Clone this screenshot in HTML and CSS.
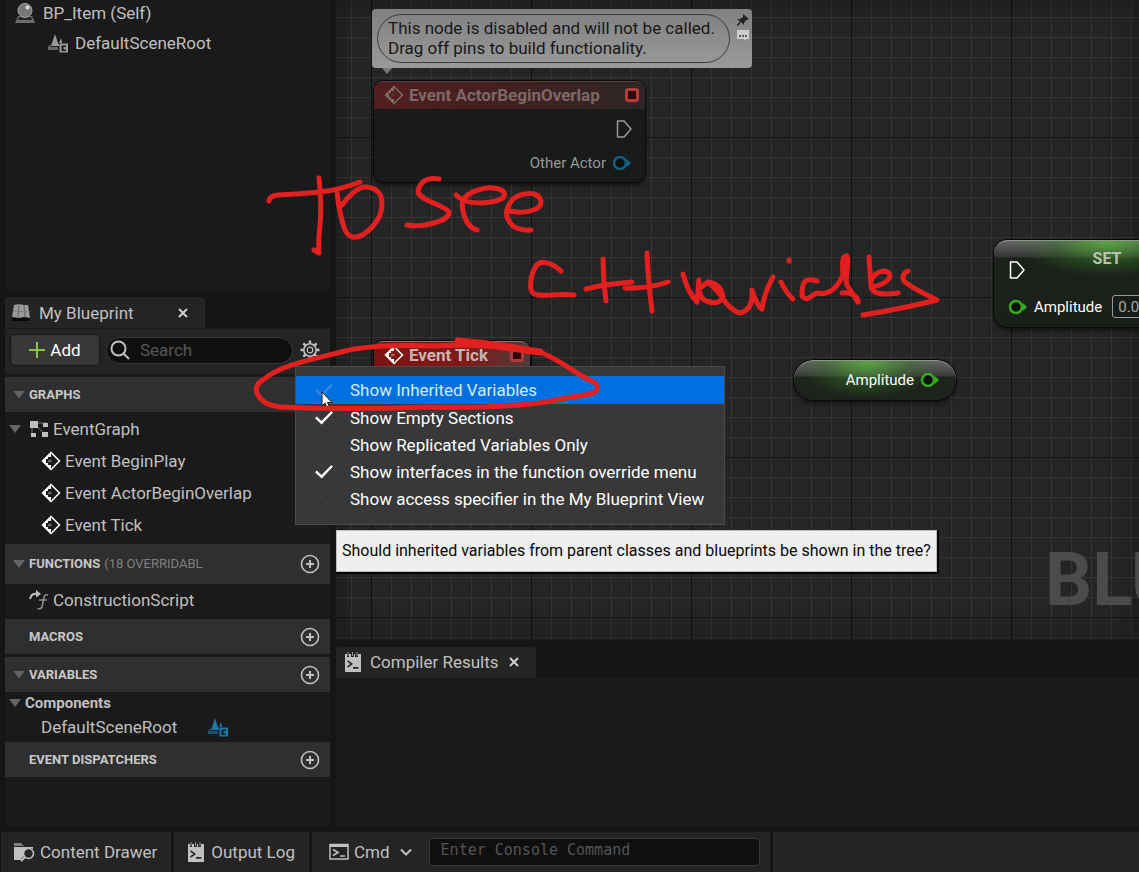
FILE: index.html
```html
<!DOCTYPE html>
<html lang="en">
<head>
<meta charset="utf-8">
<meta name="viewport" content="width=device-width, initial-scale=1">
<title>BP_Item Blueprint Editor</title>
<link rel="stylesheet" href="styles.css">
</head>
<body>
<svg class="defs" aria-hidden="true">
  <symbol id="i-scene" viewBox="0 0 22 20">
    <path d="M1 14h10v3H1zM3 11 1 14h3z" opacity=".6"/>
    <path d="M8 1 4 13h8zM14 5l-3 8h5z"/>
    <path d="M12 10h9v9h-9z" class="cut"/>
    <path fill-rule="evenodd" d="M12.500 10.500h8.500v9h-8.500zM14.500 12.500v5.500h4.500v-1.500h-2.500v-2.500h2.500v-1.500z"/>
  </symbol>
  <symbol id="i-event" viewBox="0 0 20 20">
    <path d="M10 1.500 18.500 10 10 18.500 1.500 10z" fill="none" stroke="currentColor" stroke-width="1.500"/>
    <path d="M10 1v5H7v2H5v4h2v2h3v5L1 10z"/>
    <path d="M7 8.800h3.500v2.400H7z" opacity=".35"/>
  </symbol>
  <symbol id="i-log" viewBox="0 0 16 20">
    <path fill-rule="evenodd" d="M0 2h2v3h2V2h2v3h3V2h1v3h3V2h3v18H0zM2.500 8v2l3 2-3 2v2l5-3.500v-1zM8 15v1.800h5.500V15z"/>
    <path d="M2.500 0h1v4h-1zM7 0h1v4H7zM11.500 0h1v4h-1z" opacity=".7"/>
  </symbol>
  <symbol id="i-plus" viewBox="0 0 20 20">
    <circle cx="10" cy="10" r="8.500" fill="none" stroke="currentColor" stroke-width="1.600"/>
    <path d="M10 6v8M6 10h8" stroke="currentColor" stroke-width="2"/>
  </symbol>
  <symbol id="i-exec" viewBox="0 0 16 18">
    <path d="M1.500 1h6.500l7 8-7 8H1.500z" fill="none" stroke="currentColor" stroke-width="1.500" stroke-linejoin="round"/>
  </symbol>
  <symbol id="i-pin" viewBox="0 0 20 16">
    <circle cx="8" cy="8" r="6" fill="#0a120c" stroke="currentColor" stroke-width="2.500"/>
    <path d="m15 4 4 4-4 4z"/>
  </symbol>
  <symbol id="i-close" viewBox="0 0 10 10">
    <path d="m1 1 8 8M9 1 1 9" stroke="currentColor" stroke-width="2"/>
  </symbol>
</svg>

<main class="workspace">
  <aside class="side">
    <section class="components">
      <div class="item root">
        <svg class="icon" viewBox="0 0 20 20"><path d="M3 13h14l3 7H0z" fill="#6c6c6c"/><path d="M4 14h12l1 3H3z" fill="#222"/><circle cx="10" cy="7.500" r="7" fill="#777" stroke="#aaa"/><circle cx="12.500" cy="4.500" r="2" fill="#ddd"/></svg>
        <span>BP_Item (Self)</span>
      </div>
      <div class="item scene">
        <svg class="icon wide"><use href="#i-scene"/></svg>
        <span>DefaultSceneRoot</span>
      </div>
    </section>

    <section class="blueprint">
      <div class="tab">
        <svg class="icon" viewBox="0 0 20 20"><path d="M1 14h18v4H1z" fill="#090909"/><path d="M3 2 8 1l5 1h4l2 13-6-1-5 1-7-1z" fill="#999"/><path d="m8 1-1 13M13 2l1 12" stroke="#666"/><path d="m2 8 17 1" stroke="#7c7c7c"/></svg>
        <h2>My Blueprint</h2>
        <button class="close" aria-label="Close My Blueprint"><svg><use href="#i-close"/></svg></button>
      </div>
      <div class="toolbar">
        <button class="add"><svg class="plus" viewBox="0 0 16 16"><path d="M8 0v16M0 8h16" stroke="#8bc24a" stroke-width="2"/></svg>Add</button>
        <label class="search">
          <svg class="icon" viewBox="0 0 20 20"><circle cx="8.500" cy="8.500" r="7" fill="none" stroke="currentColor" stroke-width="2"/><path d="m13.500 13.500 5.500 5.500" stroke="currentColor" stroke-width="2"/></svg>
          <input type="search" placeholder="Search" aria-label="Search">
        </label>
        <button class="plain" aria-label="View options"><svg class="icon line" viewBox="0 0 20 20"><circle cx="10" cy="10" r="6.200" stroke-width="1.600"/><circle cx="10" cy="10" r="2.800" stroke-width="1.200"/><path stroke-width="2.400" d="M10 .5v3M10 16.500v3M.5 10h3M16.500 10h3M3.300 3.300l2.100 2.100M14.600 14.600l2.100 2.100M3.300 16.700l2.100-2.100M14.600 5.400l2.100-2.100"/></svg></button>
      </div>

      <div class="category"><i class="arrow"></i><h3>GRAPHS</h3></div>
      <div class="list">
        <div class="item graph"><i class="arrow"></i>
          <svg class="icon" viewBox="0 0 20 20"><path d="M3 5v11M5 4h13M6 5l10 11" stroke="#777" fill="none"/><path d="M1 2h8v7H1zM14 4h5v4h-5zM2 14h5v4H2zM13 13h6v5h-6z"/></svg>
          <span>EventGraph</span></div>
        <div class="item event"><svg class="icon white"><use href="#i-event"/></svg><span>Event BeginPlay</span></div>
        <div class="item event"><svg class="icon white"><use href="#i-event"/></svg><span>Event ActorBeginOverlap</span></div>
        <div class="item event"><svg class="icon white"><use href="#i-event"/></svg><span>Event Tick</span></div>
      </div>
      <div class="category tall"><i class="arrow"></i><h3>FUNCTIONS</h3><small>(18 OVERRIDABL</small>
        <button class="plain" aria-label="Add function"><svg class="icon"><use href="#i-plus"/></svg></button></div>
      <div class="item function">
        <svg class="icon line" viewBox="0 0 20 20"><path d="M1 9c1-5 4-6 8-5" stroke-width="2"/><path d="m7 0 5 4-5 3.500z" fill="currentColor" stroke="none"/><path d="M19 5c-3-1-4 1-4.500 4l-1 6c-.5 3-2 4.500-5 3.500M10 10h8" stroke="#8a8a8a" stroke-width="1.600"/></svg>
        <span>ConstructionScript</span></div>
      <div class="category"><i class="arrow none"></i><h3>MACROS</h3>
        <button class="plain" aria-label="Add macro"><svg class="icon"><use href="#i-plus"/></svg></button></div>
      <div class="category spaced"><i class="arrow"></i><h3>VARIABLES</h3>
        <button class="plain" aria-label="Add variable"><svg class="icon"><use href="#i-plus"/></svg></button></div>
      <div class="item group"><i class="arrow"></i><strong>Components</strong></div>
      <div class="item variable"><span>DefaultSceneRoot</span><svg class="icon wide blue"><use href="#i-scene"/></svg></div>
      <div class="category"><i class="arrow none"></i><h3>EVENT DISPATCHERS</h3>
        <button class="plain" aria-label="Add event dispatcher"><svg class="icon"><use href="#i-plus"/></svg></button></div>
    </section>
  </aside>

  <div class="center">
    <section class="canvas" aria-label="Event graph">
      <div class="watermark">BLUEPRINT</div>

      <div class="bubble">
        <p>This node is disabled and will not be called.<br>Drag off pins to build functionality.</p>
        <div class="bubble-tools">
          <svg viewBox="0 0 12 12"><path d="m6 0 6 5-2 1-1 0-2 3v2L4 8l-3 4-1 0 0-1 3-4L0 5h3l3-2z" fill="#222"/></svg>
          <svg viewBox="0 0 12 12"><path d="M0 1h12v9H9l-2 2v-2H0z" fill="#ccc"/><path d="M2 6h2v2H2zM5 6h2v2H5zM8 6h2v2H8z" fill="#53606c"/></svg>
        </div>
      </div>

      <article class="node overlap">
        <header><svg class="icon"><use href="#i-event"/></svg><h4>Event ActorBeginOverlap</h4><b class="delegate"></b></header>
        <div class="pins">
          <svg class="exec"><use href="#i-exec"/></svg>
          <div class="pin-row">Other Actor <svg class="pin blue"><use href="#i-pin"/></svg></div>
        </div>
      </article>

      <article class="node tick">
        <header><svg class="icon"><use href="#i-event"/></svg><h4>Event Tick</h4><b class="delegate"></b></header>
      </article>

      <article class="node setter">
        <h4>SET</h4>
        <svg class="exec"><use href="#i-exec"/></svg>
        <label class="pin-row"><svg class="pin green"><use href="#i-pin"/></svg> Amplitude <input type="text" value="0.0"></label>
      </article>

      <article class="node getter">Amplitude <svg class="pin green"><use href="#i-pin"/></svg></article>
    </section>

    <section class="results">
      <div class="tab">
        <svg class="log"><use href="#i-log"/></svg>
        <h2>Compiler Results</h2>
        <button class="close" aria-label="Close Compiler Results"><svg><use href="#i-close"/></svg></button>
      </div>
      <div class="results-body"></div>
    </section>
  </div>

  <div class="menu">
    <label class="hover"><input type="checkbox">Show Inherited Variables</label>
    <label><input type="checkbox" checked>Show Empty Sections</label>
    <label><input type="checkbox">Show Replicated Variables Only</label>
    <label><input type="checkbox" checked>Show interfaces in the function override menu</label>
    <label><input type="checkbox">Show access specifier in the My Blueprint View</label>
  </div>
  <div class="tooltip" role="tooltip">Should inherited variables from parent classes and blueprints be shown in the tree?</div>

  <svg class="cursor" viewBox="0 0 13 18"><path d="M1 1v14l3-3 2 5 2.500-1-2-4.500H11z" fill="#fff" stroke="#111"/></svg>

  <svg class="ink" viewBox="0 0 1139 832" role="img" aria-label="To see C++ variables">
    <path d="M269 201Q269 196 278 195Q300 194 320 192T360 182"/>
    <path d="M319 178Q322 205 320 225T319 253L314 250"/>
    <path d="M337 192Q339 213 345 230Q351 242 364 234Q386 218 381 196Q376 186 363 187Q353 190 342 205"/>
    <path d="M439 179C424 176 419 185 418 192C421 201 444 205 449 212C450 221 422 228 407 225"/>
    <path d="M456 195C465 206 492 204 503 198C510 189 490 185 478 190C459 196 462 206 463 211C465 221 470 228 477 230"/>
    <path d="M508 211C524 214 542 211 541 201C538 189 519 194 513 199C502 212 507 220 513 226Q521 231 531 230"/>
    <path d="M561 271C552 263 541 259 536 266C530 275 529 290 533 293C538 298 558 293 574 295"/>
    <path d="M586 289Q605 284 632 282M603 259Q603 280 606 301M625 288Q648 289 668 282M647 253Q648 280 652 311"/>
    <path d="M683 274Q688 293 697 302L699 280Q697 291 703 299Q716 307 723 298Q722 284 708 282L700 288M708 282Q719 292 726 303Q735 313 741 313Q754 308 752 290Q757 306 762 309Q764 293 773 277"/>
    <path d="M781 282Q787 294 793 299M789 260v1"/>
    <path d="M817 281C804 277 802 282 802 296C808 303 812 294 817 293Q833 297 843 275C842 263 842 255 847 256C850 263 844 278 847 285Q852 293 858 302C859 301 855 291 842 293"/>
    <path d="M869 257L871 286Q872 297 898 293M872 287C889 284 896 273 884 271Q874 272 871 281"/>
    <path d="M908 271Q901 274 904 281Q910 287 937 300Q906 308 863 315"/>
    <path d="M458 340Q499 343 540 352C565 362 577 376 594 382Q603 390 590 394Q565 398 540 403Q500 408 427 407Q350 410 280 407C256 404 250 386 263 380C279 365 315 359 345 351Q375 344 435 346Q500 343 530 352"/>
    <path d="M458 341L505 347 540 352" stroke-width="7"/>
  </svg>
</main>

<footer class="status">
  <button><svg class="icon wide" viewBox="0 0 22 20"><path d="M1 1h7l3 3H1z" opacity=".6"/><path d="M1 5h19v2l-3-1c-5 0-8 4-6 8l-3 3v1H1z"/><circle cx="15.500" cy="11.500" r="5" fill="none" stroke="currentColor" stroke-width="1.600"/><path d="m12 15-4 4" stroke="currentColor" stroke-width="2"/></svg>Content Drawer</button>
  <button><svg class="log"><use href="#i-log"/></svg>Output Log</button>
  <div class="console">
    <button><svg class="icon line" viewBox="0 0 20 20"><path d="M1 2.500h18v14.500H1z" stroke-width="1.500"/><path d="M1 3.500h18" stroke-width="3"/><path d="m4 7.500 5 3-5 3M11 14h5" stroke-width="1.600"/></svg>Cmd<svg class="chevron" viewBox="0 0 12 8"><path d="m1 1.500 5 5 5-5" fill="none" stroke="currentColor" stroke-width="2"/></svg></button>
    <input type="text" placeholder="Enter Console Command" aria-label="Console command">
  </div>
  <div class="rest"></div>
</footer>
</body>
</html>
```

FILE: styles.css
```css
* { box-sizing: border-box; }

body {
  margin: 0;
  min-height: 100vh;
  display: flex;
  flex-direction: column;
  overflow-x: hidden;
  background: #151515;
  color: #c0c0c0;
  font: 17px/20px Roboto, "Liberation Sans", sans-serif;
}

h2, h3, h4, p { margin: 0; font: inherit; }
button, input { font: inherit; color: inherit; }
button { border: 0; background: none; padding: 0; }
svg { display: block; flex: none; fill: currentColor; }

.defs { position: absolute; width: 0; height: 0; }
.cut { fill: #1a1a1a; }
.icon { width: 20px; height: 20px; }
.icon.wide { width: 22px; }
.line { fill: none; stroke: currentColor; }
.white { color: #fff; }
.log { width: 16px; height: 20px; }
.blue { color: #1c76a8; }

.workspace {
  position: relative;
  flex: 1;
  display: grid;
  grid-template-columns: 325px minmax(0, 1fr);
  gap: 6px;
  padding: 0 0 6px 5px;
}

.side { display: flex; flex-direction: column; gap: 6px; }
.components { flex: 1; background: #1a1a1a; padding-top: 3px; }
.item { display: flex; align-items: center; }
.root { padding-left: 10px; gap: 8px; }
.scene { padding-left: 42px; gap: 6px; margin-top: 10px; }
.scene svg { color: #999; }

.blueprint { background: linear-gradient(#151515 31px, #1a1a1a 31px); padding-bottom: 49px; }
.tab {
  display: flex;
  align-items: center;
  width: 200px;
  height: 31px;
  padding: 0 17px 0 6px;
  gap: 8px;
  background: #242424;
  border-radius: 4px 4px 0 0;
}
.close { margin-left: auto; color: #d0d0d0; }
.close svg { width: 10px; height: 10px; }

.toolbar {
  display: flex;
  align-items: center;
  gap: 7px;
  height: 45px;
  margin-top: 1px;
  padding: 0 10px 3px 6px;
  background: #242424;
}
.add {
  display: flex;
  align-items: center;
  justify-content: center;
  gap: 5px;
  width: 88px;
  height: 30px;
  border-radius: 4px;
  background: #383838;
  color: #fff;
  box-shadow: 0 0 0 1px #161616;
}
.plus { width: 16px; height: 16px; }
.search {
  flex: 1;
  display: flex;
  align-items: center;
  gap: 10px;
  height: 27px;
  padding: 0 10px 0 3px;
  border: 1px solid #383838;
  border-radius: 14px;
  background: #0f0f0f;
}
.search input { width: 100%; min-width: 0; padding: 0; border: 0; background: none; outline: 0; }
.search input::placeholder { color: #575757; opacity: 1; }

.category {
  display: flex;
  align-items: center;
  height: 35px;
  padding: 0 10px 0 8px;
  background: #2f2f2f;
  font-size: 13px;
}
.toolbar + .category { margin-top: 3px; }
.category h3 { font-weight: 700; color: #c8c8c8; }
.category small { margin-left: 4px; font-size: 13px; color: #808080; }
.category .plain { margin-left: auto; }
.category.tall { height: 40px; }
.category.spaced { margin-top: 3px; }
.arrow {
  flex: none;
  width: 12px;
  height: 8px;
  margin-right: 4px;
  background: #656565;
  clip-path: polygon(0 0, 100% 0, 50% 100%);
}
.arrow.none { visibility: hidden; }

.list .item { height: 32px; }
.list { padding: 1px 0 3px; }
.graph { padding-left: 4px; }
.graph svg { margin: 0 4px; }
.event { padding-left: 36px; gap: 4px; }
.function { height: 35px; padding: 0 0 3px 24px; gap: 4px; }
.group { height: 22px; padding-left: 4px; font-size: 15px; }
.variable { height: 28px; padding: 0 0 2px 36px; gap: 30px; }

.center { display: flex; flex-direction: column; gap: 7px; min-width: 0; }
.canvas {
  --minor: rgb(255 255 255 / 7%);
  position: relative;
  flex: 1;
  overflow: hidden;
  background-color: #252525;
  background-image:
    linear-gradient(90deg, #111 1px, transparent 1px),
    linear-gradient(#151515 1px, transparent 1px),
    linear-gradient(90deg, var(--minor) 1px, transparent 1px),
    linear-gradient(var(--minor) 1px, transparent 1px);
  background-size: 160px 160px, 160px 160px, 20px 20px, 20px 20px;
  background-position: 35px 137px, 35px 137px, 15px 17px, 15px 17px;
  box-shadow: inset 0 0 30px rgb(0 0 0 / 35%);
}
.watermark {
  position: absolute;
  left: 709px;
  top: 540px;
  color: #4b4b4b;
  font-size: 74px;
  line-height: 80px;
  font-weight: 700;
}

.bubble {
  position: absolute;
  left: 36px;
  top: 9px;
  display: flex;
  gap: 7px;
  padding: 5px 3px 5px 5px;
  border-radius: 4px;
  background: linear-gradient(#808080, #9a9a9a);
  color: #171717;
  white-space: nowrap;
}
.bubble::after {
  content: "";
  position: absolute;
  left: 10px;
  top: 100%;
  width: 10px;
  height: 6px;
  background: #777;
  clip-path: polygon(0 0, 100% 0, 50% 100%);
}
.bubble p { padding: 3px 14px 4px 10px; border: 1px solid #3c3c3c; border-radius: 25px; }
.bubble-tools { display: grid; gap: 3px; align-content: start; }
.bubble-tools svg { width: 12px; height: 12px; }

.node {
  position: absolute;
  border-radius: 9px;
  background: #171a18;
  color: #e6e6e6;
  font-size: 15px;
  box-shadow: 0 0 0 1px #0a0a0a, 0 3px 5px rgb(0 0 0 / 60%);
  white-space: nowrap;
}
.node h4 { font-size: 17px; font-weight: 700; }
.node header { display: flex; align-items: center; gap: 5px; height: 28px; padding: 0 6px 2px 10px; border-radius: 9px 9px 0 0; }
.delegate { width: 14px; height: 14px; margin-left: auto; border: 3px solid #b13a3a; border-radius: 3px; background: #2c0808; }
.exec { width: 16px; height: 18px; }
.pin { width: 20px; height: 16px; }
.pin-row { display: flex; align-items: center; gap: 6px; }
.green { color: #38a81e; }

.overlap { left: 38px; top: 81px; width: 271px; height: 101px; background: rgb(21 25 22 / 85%); color: #7d6868; }
.overlap header { background: linear-gradient(90deg, #521e1e, #422020 50%, #2c2625); border-top: 1px solid #514141; }
.overlap .pins { display: grid; justify-items: end; gap: 15px; padding: 11px 13px; color: #999; }
.overlap .pin.blue { color: #175e80; }

.tick { left: 38px; top: 341px; width: 156px; height: 100px; color: #c9b4b4; }
.tick header { background: linear-gradient(90deg, #7c1313, #811a1a 60%, #4c3c3a); border-top: 1px solid #8b7777; }
.tick .icon { color: #fff; }

.setter {
  left: 658px;
  top: 240px;
  width: 226px;
  padding: 8px 14px 9px;
  border-radius: 14px;
  background:
    radial-gradient(ellipse 90px 36px at 50% 0, rgb(90 180 62 / 80%), rgb(50 120 35 / 40%) 60%, transparent),
    linear-gradient(#666 0, #333 16px, #1c211c 17px, #1a1f19);
  border-top: 1px solid #8b9b85;
}
.setter h4 { text-align: center; font-size: 16px; color: #b7c4b2; }
.setter .exec { margin: -8px 0 16px 1px; color: #fff; }
.setter .pin-row { color: #fff; }
.setter input { width: 50px; height: 23px; margin-left: 4px; padding: 0 5px; border: 1px solid #999; border-radius: 3px; background: #181c18; color: #aaa; }

.getter {
  left: 458px;
  top: 360px;
  width: 162px;
  height: 40px;
  display: flex;
  align-items: center;
  justify-content: flex-end;
  gap: 6px;
  padding: 0 16px 2px 0;
  border-radius: 20px;
  border-top: 1px solid #8b9b85;
  background:
    radial-gradient(ellipse 70px 38px at 45% 0, rgb(90 180 62 / 80%), rgb(50 120 35 / 40%) 60%, transparent),
    linear-gradient(#666 0, #3a3a3a 15px, #1e241d 16px, #1d221c);
  color: #fff;
}

.results .tab { height: 31px; padding: 0 17px 1px 9px; gap: 9px; }
.results-body { min-height: 148px; background: #1a1a1a; }

.menu {
  position: absolute;
  left: 295px;
  top: 366px;
  width: 430px;
  padding: 9px 0 12px;
  border: 1px solid #4a4a4a;
  background: #383838;
  color: #fff;
}
.menu label { display: flex; align-items: center; gap: 17px; height: 27px; padding-left: 19px; white-space: nowrap; }
.menu .hover { height: 28px; background: #0070e0; color: #d6ecff; }
.menu input {
  appearance: none;
  width: 18px;
  height: 14px;
  margin: 0;
  background: #353535;
  clip-path: polygon(0 55%, 10% 43%, 36% 75%, 90% 5%, 100% 15%, 37% 100%);
}
.menu input:checked { background: #fff; }
.menu .hover input { background: #2f88e6; }

.tooltip {
  position: absolute;
  left: 336px;
  top: 530px;
  padding: 10px 5px;
  background: #efefef;
  border: 1px solid #bdbdbd;
  color: #080808;
  font-size: 16px;
  box-shadow: 1px 1px 0 1px #060606;
  white-space: nowrap;
}

.cursor { position: absolute; left: 321px; top: 391px; width: 13px; height: 18px; }
.ink {
  position: absolute;
  left: 0;
  top: 0;
  width: 1139px;
  height: 832px;
  fill: none;
  stroke: #e2201f;
  stroke-width: 5px;
  stroke-linecap: round;
  stroke-linejoin: round;
  pointer-events: none;
}

.status { display: flex; gap: 3px; height: 40px; padding-left: 1px; }
.status > * { background: #242424; }
.status button { display: flex; align-items: center; gap: 5px; padding: 0 14px 0 12px; white-space: nowrap; }
.status .log { margin: 0 2px; }
.status .log + * { margin: 0; }
.console { display: flex; align-items: center; padding: 0 10px 0 5px; }
.console .chevron { width: 12px; height: 8px; margin-left: 5px; }
.console input {
  width: 331px;
  height: 28px;
  margin-left: 3px;
  padding: 0 11px 4px;
  border: 1px solid #383838;
  border-radius: 4px;
  background: #0f0f0f;
  font: 15px/20px "DejaVu Sans Mono", monospace;
}
.console input::placeholder { color: #555; opacity: 1; }
.rest { flex: 1; }
```
